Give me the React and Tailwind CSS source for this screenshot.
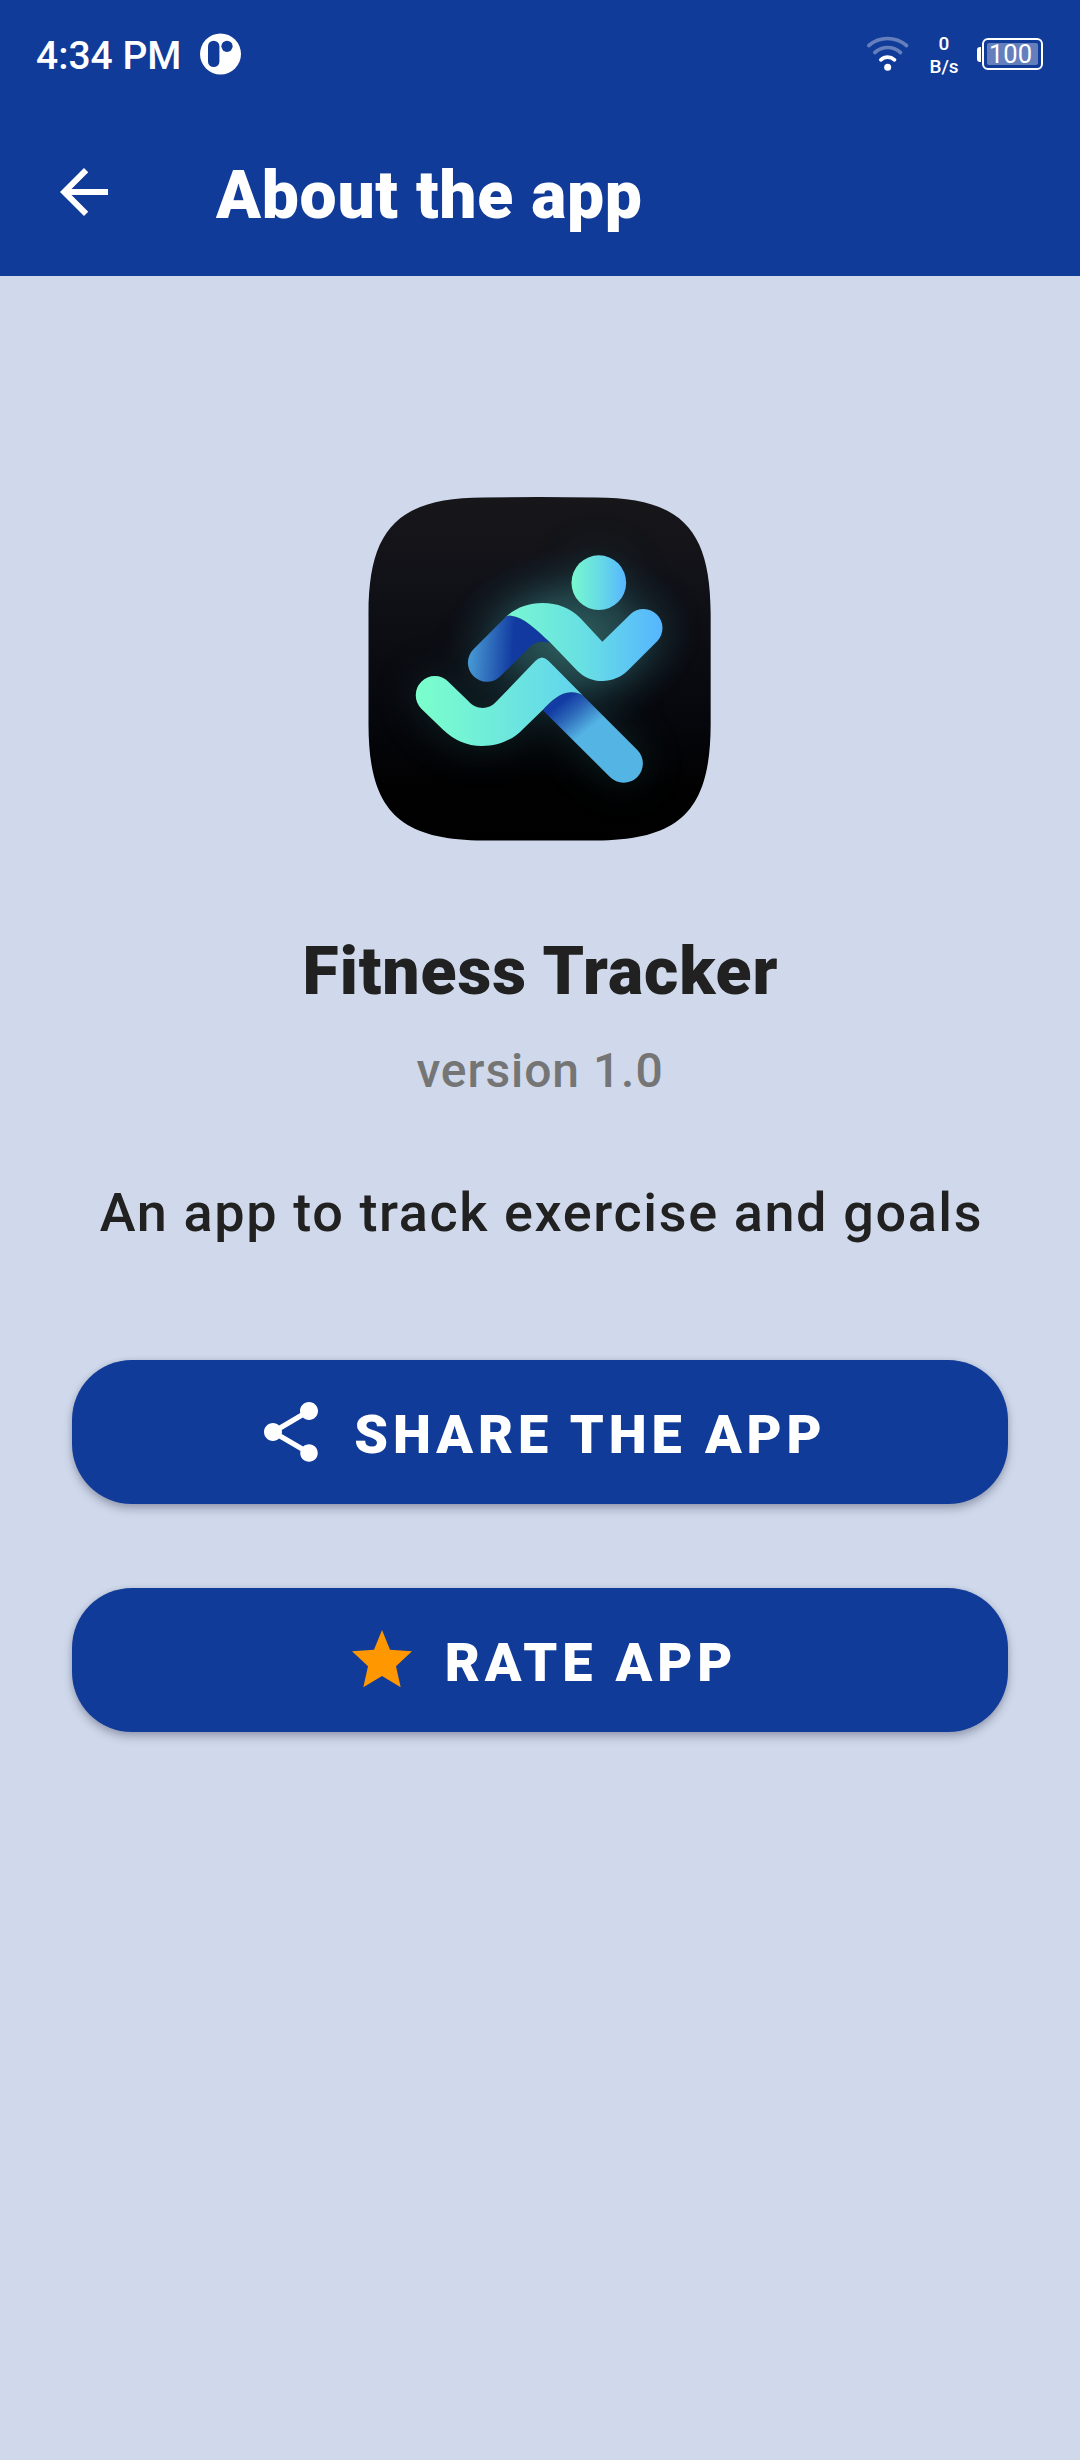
function ReaderBadge() {
  return (
    <svg className="ml-[18px] size-[42px]" viewBox="0 0 42 42">
      <circle cx="21.500" cy="21" r="20.5" fill="#fff" />
      <rect x="9" y="7.7" width="11.4" height="26.4" rx="5.7" fill="#113b98" />
      <circle cx="28" cy="13.3" r="5.6" fill="#113b98" />
    </svg>
  );
}

function WifiIcon() {
  return (
    <svg className="h-[36px] w-[42px]" viewBox="140.500 106.500 126 108" fill="none" strokeLinecap="round">
      <path d="M146 135 C178 107 226 107 259 135" stroke="#fff" strokeOpacity=".35" strokeWidth="11" />
      <path d="M164 156 C187 136 218 136 241 156" stroke="#fff" strokeOpacity=".35" strokeWidth="11" />
      <path d="M182 178 C194 167 211 167 223 178" stroke="#fff" strokeWidth="11" />
      <circle cx="202.500" cy="200" r="10.500" fill="#fff" />
    </svg>
  );
}

function Battery() {
  return (
    <div className="ml-[16px] flex items-center">
      <div className="h-[15px] w-[4px] rounded-l-[3px] bg-white" />
      <div className="ml-px flex h-[32px] w-[61px] rounded-[6px] border-2 border-white p-[3px]">
        <div className="flex h-[22px] w-[51px] items-center justify-center rounded-[2px] bg-white/35 pr-[4px] text-[25.5px] leading-[22px] font-normal">
          100
        </div>
      </div>
    </div>
  );
}

function StatusBar() {
  return (
    <div className="flex h-[108px] items-center justify-between pr-[37px] pl-[36px] font-medium">
      <div className="flex items-center">
        <span className="pt-[3px] text-[39px] leading-[46px]">4:34 PM</span>
        <ReaderBadge />
      </div>
      <div className="flex items-center">
        <WifiIcon />
        <div className="ml-[18px] w-[34px] pt-[2px] text-center text-[19px] leading-[23px]">
          <div>0</div>
          <div>B/s</div>
        </div>
        <Battery />
      </div>
    </div>
  );
}

function AppBar() {
  return (
    <div className="flex h-[168px] items-center pl-[48px]">
      <svg className="size-[72px]" viewBox="0 0 24 24" fill="#fff">
        <path d="M20 11H7.830l5.590-5.590L12 4l-8 8 8 8 1.410-1.410L7.830 13H20v-2z" />
      </svg>
      <h1 className="mt-[7px] ml-[96px] text-[66px] leading-[80px] font-black tracking-[0.011em]">
        About the app
      </h1>
    </div>
  );
}

const TILE =
  "M568 51 L738 52.500 C992 54 1081 144 1082 400 V734 C1081 990 992 1080 738 1081.500 H400 C146 1080 56 990 55.500 734 V400 C56 144 146 54 400 52.500 Z";
const TORSO =
  "M468 410 C500 382 535 369 578 369 C622 369 660 384 690 413 L757 485 L842 402 A57 57 0 0 1 923 482 L832 573 C812 592 785 603 757 603 C728 603 702 592 682 572 L600 487 C560 449 520 410 483 407 Q475 406 468 410Z";
const ARM =
  "M468 410 L371 507 A57 57 0 0 0 451 589 L540 500 C552 488 565 485 580 485 L600 488 C560 449 520 410 483 407 Q475 406 468 410Z";
const FRONT_LEG =
  "M295 605 L354 662 C378 690 415 690 437 667 L556 543 Q576 522 596 543 L700 648 Q685 636 662 637 C630 638 605 662 578 690 L520 746 C488 780 445 798 396 798 C350 798 312 780 280 750 L214 686 A57 57 0 0 1 295 605Z";
const BACK_LEG =
  "M578 690 L780 891 A57 57 0 0 0 862 810 L700 648 Q685 636 662 637 C630 638 605 662 578 690Z";

function RunnerLogo() {
  return (
    <svg className="size-[344px]" viewBox="54 51 1032 1032">
      <defs>
        <linearGradient id="tile" x1="0" y1="0" x2="0" y2="1">
          <stop offset="0" stopColor="#17171a" />
          <stop offset=".25" stopColor="#111118" />
          <stop offset=".65" stopColor="#06070c" />
          <stop offset=".85" stopColor="#010101" />
          <stop offset="1" stopColor="#000" />
        </linearGradient>
        <linearGradient id="head" x1="0" x2="1">
          <stop offset="0" stopColor="#78f8cf" />
          <stop offset=".5" stopColor="#67dce4" />
          <stop offset="1" stopColor="#57b6ff" />
        </linearGradient>
        <linearGradient id="torso" gradientUnits="userSpaceOnUse" x1="470" x2="940" y1="0" y2="0">
          <stop offset="0" stopColor="#78f7d0" />
          <stop offset=".5" stopColor="#67dfe4" />
          <stop offset="1" stopColor="#56b4ff" />
        </linearGradient>
        <linearGradient id="arm" gradientUnits="userSpaceOnUse" x1="354" x2="555" y1="0" y2="15">
          <stop offset="0" stopColor="#57b6e8" />
          <stop offset=".45" stopColor="#3577c0" />
          <stop offset=".85" stopColor="#123ba2" />
          <stop offset="1" stopColor="#1139a0" />
        </linearGradient>
        <linearGradient id="frontLeg" gradientUnits="userSpaceOnUse" x1="198" x2="690" y1="0" y2="0">
          <stop offset="0" stopColor="#7bffcb" />
          <stop offset=".45" stopColor="#70ecda" />
          <stop offset="1" stopColor="#61d3ee" />
        </linearGradient>
        <linearGradient id="backLeg" gradientUnits="userSpaceOnUse" x1="632" y1="668" x2="705" y2="758">
          <stop offset="0" stopColor="#123ba4" />
          <stop offset=".4" stopColor="#2c66b8" />
          <stop offset="1" stopColor="#54b5e4" />
        </linearGradient>
        <radialGradient id="core">
          <stop offset="0" stopColor="#3f7d7a" stopOpacity=".72" />
          <stop offset=".45" stopColor="#2f666a" stopOpacity=".5" />
          <stop offset=".75" stopColor="#22505a" stopOpacity=".16" />
          <stop offset="1" stopColor="#1c4450" stopOpacity="0" />
        </radialGradient>
        <filter id="wide" x="-60%" y="-60%" width="220%" height="220%">
          <feGaussianBlur stdDeviation="64" />
        </filter>
        <clipPath id="tileClip">
          <path d={TILE} />
        </clipPath>
      </defs>
      <path d={TILE} fill="url(#tile)" />
      <g clipPath="url(#tileClip)">
        <g filter="url(#wide)" fill="#24565a" opacity=".38">
          <circle cx="746" cy="308" r="82" />
          <path d={TORSO} />
          <path d={ARM} />
          <path d={FRONT_LEG} />
          <path d={BACK_LEG} />
        </g>
        <ellipse cx="665" cy="475" rx="370" ry="275" fill="url(#core)" />
      </g>
      <circle cx="746.500" cy="308" r="82" fill="url(#head)" />
      <path d={ARM} fill="url(#arm)" />
      <path d={TORSO} fill="url(#torso)" />
      <path d={BACK_LEG} fill="url(#backLeg)" />
      <path d={FRONT_LEG} fill="url(#frontLeg)" />
    </svg>
  );
}

function ShareIcon() {
  return (
    <svg className="size-[72px]" viewBox="0 0 24 24" fill="#fff">
      <path d="M18 16.080c-.76 0-1.440.3-1.960.77L8.910 12.700c.05-.23.09-.46.09-.7s-.04-.47-.09-.7l7.050-4.110c.54.5 1.250.81 2.040.81 1.660 0 3-1.340 3-3s-1.340-3-3-3-3 1.340-3 3c0 .24.04.47.09.7L8.040 9.810C7.500 9.310 6.790 9 6 9c-1.660 0-3 1.340-3 3s1.340 3 3 3c.79 0 1.500-.31 2.040-.81l7.120 4.160c-.05.21-.08.43-.08.65 0 1.610 1.310 2.920 2.920 2.920 1.610 0 2.920-1.310 2.920-2.920s-1.310-2.920-2.920-2.920z" />
    </svg>
  );
}

function StarIcon() {
  return (
    <svg className="size-[72px]" viewBox="138 162 216 216" fill="#ff9800">
      <path d="M246 180 L270 239 L336 244 L288 289 L302 352 L246 318 L190 352 L204 289 L156 244 L222 239Z" />
    </svg>
  );
}

function ActionButton({ icon, children }) {
  return (
    <button className="flex h-[144px] w-full items-center justify-center rounded-[60px] bg-[#113b98] pl-[2px] text-[54px] leading-[64px] font-black tracking-[0.0900em] text-white shadow-[0_5px_8px_rgba(60,60,90,0.35),0_0_5px_rgba(60,60,90,0.12)]">
      {icon}
      <span className="pt-[5px] pl-[27px]">{children}</span>
    </button>
  );
}

export default function App() {
  return (
    <div className="flex h-[2460px] w-[1080px] flex-col bg-[#cfd9eb] font-[Roboto,sans-serif] text-[#212121]">
      <header className="h-[276px] bg-[#113b98] text-white">
        <StatusBar />
        <AppBar />
      </header>
      <main className="flex flex-col items-center px-[72px] pt-[221px]">
        <RunnerLogo />
        <h2 className="mt-[91px] pl-[1px] text-[66px] leading-[80px] font-black tracking-[0.0142em]">
          Fitness Tracker
        </h2>
        <p className="mt-[29px] text-[48px] leading-[60px] font-medium tracking-[0.0195em] text-[#757575]">
          version 1.0
        </p>
        <p className="mt-[77px] pl-[3px] text-[54px] leading-[70px] font-medium tracking-[0.0298em] whitespace-nowrap">
          An app to track exercise and goals
        </p>
        <div className="mt-[112px] flex w-full flex-col gap-[84px]">
          <ActionButton icon={<ShareIcon />}>SHARE THE APP</ActionButton>
          <ActionButton icon={<span className="pl-px"><StarIcon /></span>}>RATE APP</ActionButton>
        </div>
      </main>
    </div>
  );
}
